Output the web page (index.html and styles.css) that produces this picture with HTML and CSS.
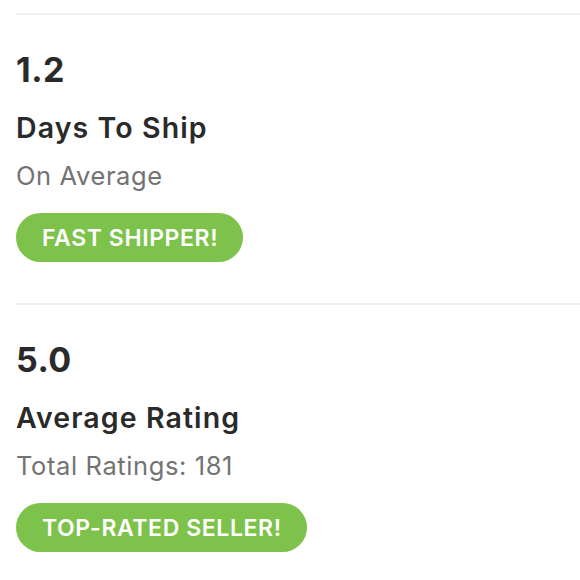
FILE: index.html
```html
<!DOCTYPE html>
<html>
<head>
<meta charset="utf-8">
<link rel="stylesheet" href="styles.css">
</head>
<body>
<div class="list">
  <section class="stat">
    <div class="value">1.2</div>
    <div class="label">Days To Ship</div>
    <div class="sub">On Average</div>
    <span class="badge">FAST SHIPPER!</span>
  </section>
  <section class="stat">
    <div class="value">5.0</div>
    <div class="label">Average Rating</div>
    <div class="sub">Total Ratings: 181</div>
    <span class="badge">TOP-RATED SELLER!</span>
  </section>
</div>
</body>
</html>
```
FILE: styles.css
```css
html, body {
  margin: 0;
  padding: 0;
  background: #ffffff;
}
body {
  font-family: Inter, Lato, sans-serif;
  color: #2a2a2a;
}
.list {
  padding-top: 13px;
  padding-left: 16px;
}
.stat {
  border-top: 2px solid #efefef;
  display: flex;
  flex-direction: column;
  align-items: flex-start;
  padding-top: 35px;
  padding-bottom: 41px;
}
.value {
  font-size: 34px;
  line-height: 40px;
  font-weight: 700;
  letter-spacing: 0.5px;
}
.label {
  margin-top: 21px;
  font-size: 28.5px;
  line-height: 34px;
  font-weight: 600;
  letter-spacing: 1.1px;
}
.sub {
  margin-top: 16px;
  font-size: 25.5px;
  line-height: 30px;
  color: #737373;
  letter-spacing: 0.6px;
}
.badge {
  margin-top: 22px;
  height: 49px;
  box-sizing: border-box;
  padding: 0 25px 0 26px;
  display: flex;
  align-items: center;
  border-radius: 25px;
  background: #7dc24b;
  color: #ffffff;
  font-size: 23px;
  font-weight: 600;
  letter-spacing: 0.6px;
}
```
